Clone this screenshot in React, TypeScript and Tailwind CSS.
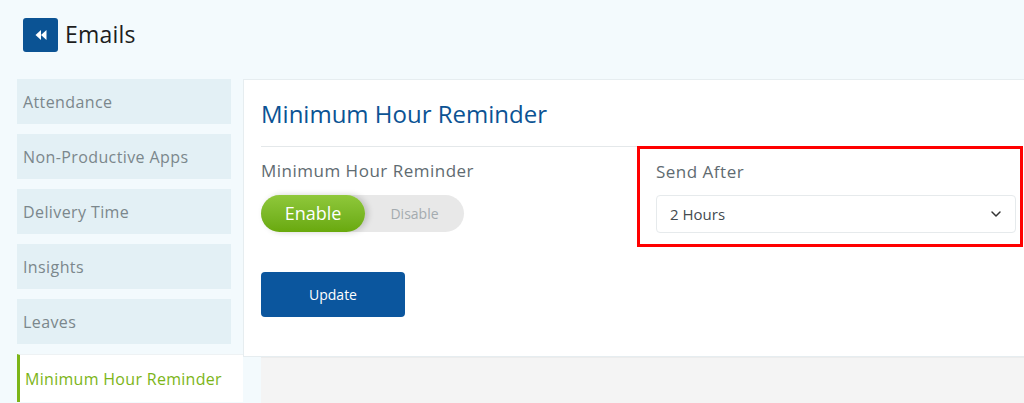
import { ChevronDown } from "lucide-react";

const MENU = ["Attendance", "Non-Productive Apps", "Delivery Time", "Insights", "Leaves"];

export default function App() {
  return (
    <div
      className="w-full h-[403px] overflow-hidden bg-[#f3fafd] flex flex-col"
      style={{ fontFamily: "'Open Sans', 'Noto Sans', sans-serif" }}
    >
      {/* header */}
      <div className="h-[79px] shrink-0 flex items-center pl-[23px] gap-[7px] pb-[10px]">
        <div className="w-[35px] h-[34px] bg-[#0b5394] rounded-[3px] flex items-center justify-center">
          <svg width="12" height="10" viewBox="0 0 12 10" fill="white">
            <path d="M6 0 L0.5 5 L6 10 Z" />
            <path d="M11.5 0 L6 5 L11.5 10 Z" />
          </svg>
        </div>
        <span className="text-[23px] text-[#1d1d1d] tracking-[0.2px]">Emails</span>
      </div>

      <div className="flex flex-1 min-h-0">
        {/* sidebar */}
        <div className="ml-[17px] w-[226px] shrink-0 flex flex-col gap-[10px]">
          {MENU.map((m) => (
            <div
              key={m}
              className="w-[214px] h-[45px] bg-[#e3f0f5] flex items-center pl-[6px] text-[16px] tracking-[0.4px] text-[#7b878c]"
            >
              {m}
            </div>
          ))}
          <div className="w-[226px] h-[48px] bg-white border-l-[3px] border-[#7cb518] border-t border-t-[#eef2f4] flex items-center pl-[5px] text-[16px] tracking-[0.3px] font-medium text-[#7cb518]">
            Minimum Hour Reminder
          </div>
        </div>

        {/* main */}
        <div className="flex-1 flex flex-col min-w-0">
          <div className="h-[278px] shrink-0 bg-white border border-[#e6edf0] border-r-0 pl-[17px] flex flex-col">
            <div className="h-[66px] flex items-center pt-[2px] text-[24px] font-medium text-[#0b5394]">
              Minimum Hour Reminder
            </div>
            <div className="flex">
              <div className="w-[376px] border-t border-[#e4e8ea] pt-[12px]">
                <div className="text-[17px] tracking-[0.5px] text-[#5f6b71] leading-[24px]">Minimum Hour Reminder</div>
                <div className="mt-[12px] w-[203px] h-[37px] rounded-full bg-[#e8e8e8] flex items-center">
                  <div className="w-[104px] h-[37px] rounded-full bg-gradient-to-b from-[#8fc83a] to-[#69a90c] shadow-[3px_0_6px_rgba(0,0,0,0.18)] flex items-center justify-center text-[18px] text-white">
                    Enable
                  </div>
                  <div className="flex-1 text-center text-[14px] text-[#a4abaf]">Disable</div>
                </div>
              </div>
              <div className="w-[386px] h-[101px] border-[3px] border-[#ff0000] pl-[16px] pr-[4px] pt-[11px]">
                <div className="text-[17px] tracking-[0.5px] text-[#5f6b71] leading-[24px]">Send After</div>
                <div className="mt-[11px] h-[38px] border border-[#e6eaec] rounded-[4px] flex items-center justify-between pl-[13px] pr-[11px] text-[15px] text-[#444b50]">
                  <span>2 Hours</span>
                  <ChevronDown size={16} strokeWidth={2.2} className="text-[#333]" />
                </div>
              </div>
            </div>
            <div className="mt-[25px]">
              <button className="w-[144px] h-[45px] bg-[#0b569e] rounded-[4px] text-white text-[14px] font-medium">
                Update
              </button>
            </div>
          </div>
          <div className="flex-1 ml-[18px] bg-[#f4f4f4] border-t border-[#ececec]" />
        </div>
      </div>
    </div>
  );
}
